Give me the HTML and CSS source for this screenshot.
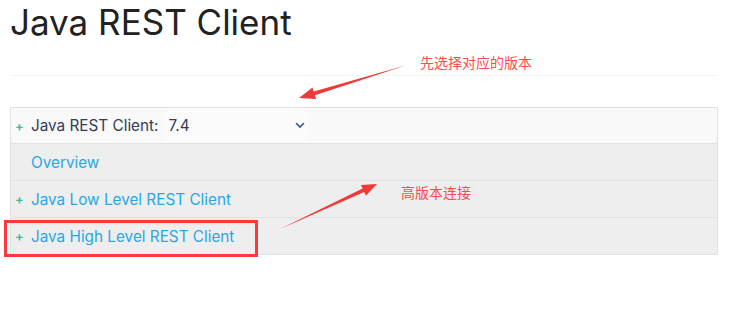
FILE: index.html
```html
<!DOCTYPE html>
<html lang="en">
<head>
  <meta charset="UTF-8" />
  <meta name="viewport" content="width=device-width, initial-scale=1.0"/>
  <title>Java REST Client</title>

  <!-- CSS Styling -->
  <link rel="stylesheet" href="styles.css">
</head>
<body>

  <div id="page">
    <!-- Page title -->
    <div class="header">
      <h1>Java REST Client</h1>
    </div>

    <!-- Table of contents -->
    <div class="toc">
      <div class="toc-row toc-version">
        <span class="plus">+</span>
        <span class="label">Java REST Client:</span>
        <div class="select">
          <span>7.4</span>
          <svg class="chevron" width="10" height="7" viewBox="0 0 10 7">
            <path d="M1.5 1.5 L5 5 L8.5 1.5" fill="none" stroke="#3d4f8f" stroke-width="1.6" stroke-linecap="round"/>
          </svg>
        </div>
      </div>
      <div class="toc-row">
        <span class="plus"></span>
        <a href="#">Overview</a>
      </div>
      <div class="toc-row">
        <span class="plus">+</span>
        <a href="#">Java Low Level REST Client</a>
      </div>
      <div class="toc-row">
        <span class="plus">+</span>
        <a href="#">Java High Level REST Client</a>
      </div>
    </div>

    <!-- Annotations drawn over the screenshot -->
    <div class="note note-version">先选择对应的版本</div>
    <div class="note note-high">高版本连接</div>
    <div class="highlight"></div>
    <svg class="arrows" width="740" height="315" viewBox="0 0 740 315">
      <path d="M407 65 L313.7 91.4 L312.5 87.6 L299 98 L316.1 99 L314.9 95.2 Z" fill="#f03a3a"/>
      <path d="M280 229 L362.6 188.5 L360.9 184.9 L377 184 L365.9 195.7 L364.2 192.1 Z" fill="#f03a3a"/>
    </svg>
  </div>

</body>
</html>
```

FILE: styles.css
```css
body {
  margin: 0;
  background: #fff;
  font-family: Inter, "Noto Sans", sans-serif;
}

#page {
  position: relative;
  width: 740px;
  height: 315px;
  padding: 0 22px 0 10px;
  box-sizing: border-box;
}

.header {
  border-bottom: 1px solid #f4f4f4;
  height: 75px;
}

h1 {
  margin: 0;
  padding-top: 2px;
  font-size: 35px;
  line-height: 40px;
  font-weight: 400;
  color: #222;
}

.toc {
  margin-top: 31px;
  border: 1px solid #e2e2e2;
}

.toc-row {
  display: flex;
  align-items: center;
  height: 36px;
  background: #eeeeee;
  border-top: 1px solid #e2e2e2;
  font-size: 15.3px;
}

.toc-row:first-child {
  border-top: none;
  height: 35px;
}

.toc-version {
  background: #f9f9f9;
  color: #343c5c;
}

.plus {
  width: 16px;
  padding-left: 4px;
  color: #3cb89c;
  font-size: 13px;
  font-weight: 600;
}

.toc-row a {
  color: #2aa6e6;
  text-decoration: none;
}

.select {
  display: flex;
  align-items: center;
  justify-content: space-between;
  box-sizing: border-box;
  margin-left: 5px;
  padding: 0 3px 0 5px;
  width: 144px;
  height: 30px;
  background: #fbfbfb;
}

.chevron {
  display: block;
}

.note {
  position: absolute;
  color: #ff4b4b;
  font-family: "Noto Sans CJK SC", sans-serif;
  font-size: 14px;
  line-height: 18px;
}

.note-version {
  left: 420px;
  top: 53px;
}

.note-high {
  left: 401px;
  top: 183px;
}

.highlight {
  position: absolute;
  left: 4px;
  top: 220px;
  width: 248px;
  height: 31px;
  border: 3px solid #ff3838;
}

.arrows {
  position: absolute;
  left: 0;
  top: 0;
  pointer-events: none;
}
```
